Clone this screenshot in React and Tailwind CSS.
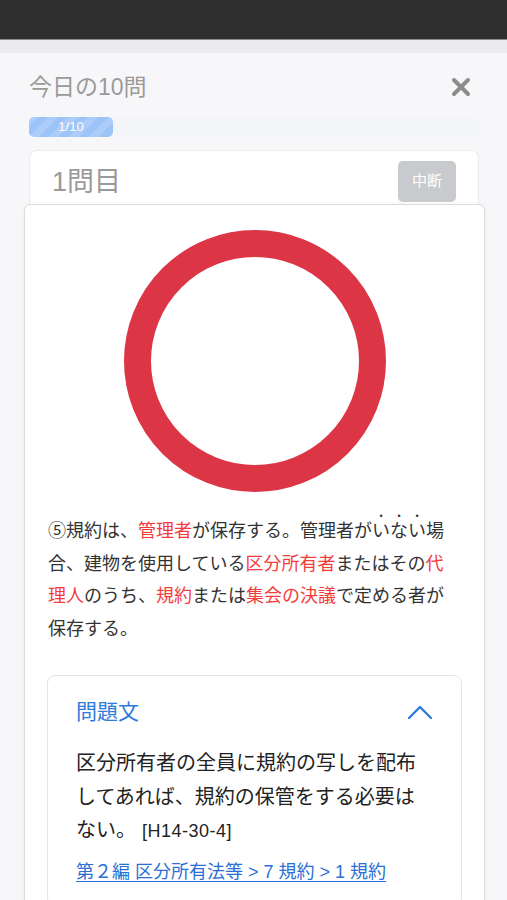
import React from 'react';

const jp = { fontFamily: '"Liberation Sans", "Noto Sans CJK JP", sans-serif' };

function Red({ children }) {
  return <span className="text-[#f23c3c]">{children}</span>;
}

function CloseIcon() {
  return (
    <svg width="20" height="20" viewBox="0 0 20 20">
      <path d="M3 3 L17 17 M17 3 L3 17" stroke="#8c8c8c" strokeWidth="4" strokeLinecap="round" />
    </svg>
  );
}

function Progress() {
  return (
    <div className="mt-[15px] h-[20px] rounded-[5px] bg-[#f4f5f8]">
      <div
        className="h-full w-[84px] rounded-[5px] flex items-center justify-center text-[13px] text-white"
        style={{
          backgroundColor: '#9dc4f8',
          backgroundImage:
            'linear-gradient(135deg, rgba(255,255,255,.15) 25%, transparent 25%, transparent 50%, rgba(255,255,255,.15) 50%, rgba(255,255,255,.15) 75%, transparent 75%, transparent)',
          backgroundSize: '20px 20px',
        }}
      >
        1/10
      </div>
    </div>
  );
}

function ChevronUp() {
  return (
    <svg width="26" height="16" viewBox="0 0 26 16">
      <path d="M2 14 L13 3 L24 14" fill="none" stroke="#2f7bdc" strokeWidth="2.4" strokeLinecap="round" strokeLinejoin="round" />
    </svg>
  );
}

export default function App() {
  return (
    <div className="w-[507px] h-[900px] overflow-hidden bg-[#f7f7f9]" style={jp}>
      <div className="h-[39px] bg-[#2f2f2f]" />
      <div className="h-[1px] bg-[#8a8a8a]" />
      <div className="h-[13px] bg-[#ececef]" />

      <div className="pl-[29px] pr-[28px]">
        <div className="flex items-center justify-between pt-[19px] pr-[8px]">
          <div className="text-[23px] leading-[30px] text-[#9a9a9a]">今日の10問</div>
          <CloseIcon />
        </div>
        <Progress />

        <div className="mt-[13px] h-[54px] bg-white border border-[#ececec] border-b-0 rounded-t-[8px] flex items-start justify-between pl-[22px] pr-[22px] pt-[10px]">
          <div className="text-[27px] leading-[42px] text-[#9a9a9a]">1問目</div>
          <div className="w-[58px] h-[41px] rounded-[5px] bg-[#c8cacd] text-white text-[15px] flex items-center justify-center">
            中断
          </div>
        </div>

        <div className="-ml-[5px] -mr-[6px] h-[700px] bg-white border border-[#dcdcdc] rounded-t-[7px] shadow-[0_0_4px_rgba(0,0,0,0.06)] px-[22px]">
          <div className="flex justify-center pt-[25px]">
            <svg width="262" height="262" viewBox="0 0 262 262">
              <circle cx="131" cy="131" r="117.5" fill="none" stroke="#dc3545" strokeWidth="27" />
            </svg>
          </div>

          <p className="mt-[19px] ml-[1px] max-w-[404px] text-[18px] leading-[32.5px] text-[#333]">
            ⑤規約は、<Red>管理者</Red>が保存する。管理者が
            <span className="[text-emphasis:dot] [text-emphasis-color:#555]">いない</span>
            場合、建物を使用している<Red>区分所有者</Red>またはその<Red>代理人</Red>のうち、<Red>規約</Red>または
            <Red>集会の決議</Red>で定める者が保存する。
          </p>

          <div className="mt-[30px] border border-[#e4e4e4] rounded-[8px] px-[28px] pt-[21px] pb-[20px]">
            <div className="flex items-center justify-between">
              <div className="text-[21px] leading-[30px] text-[#2f7bdc]">問題文</div>
              <ChevronUp />
            </div>
            <p className="mt-[20px] text-[20px] leading-[33.5px] text-[#222]">
              区分所有者の全員に規約の写しを配布してあれば、規約の保管をする必要はない。
              <span className="text-[18px] tracking-[0.5px] ml-[6px]">[H14-30-4]</span>
            </p>
            <a className="block mt-[10px] text-[18px] leading-[26px] text-[#2b6fd6] underline underline-offset-[3px]">
              第２編 区分所有法等 &gt; 7 規約 &gt; 1 規約
            </a>
          </div>
        </div>
      </div>
    </div>
  );
}
